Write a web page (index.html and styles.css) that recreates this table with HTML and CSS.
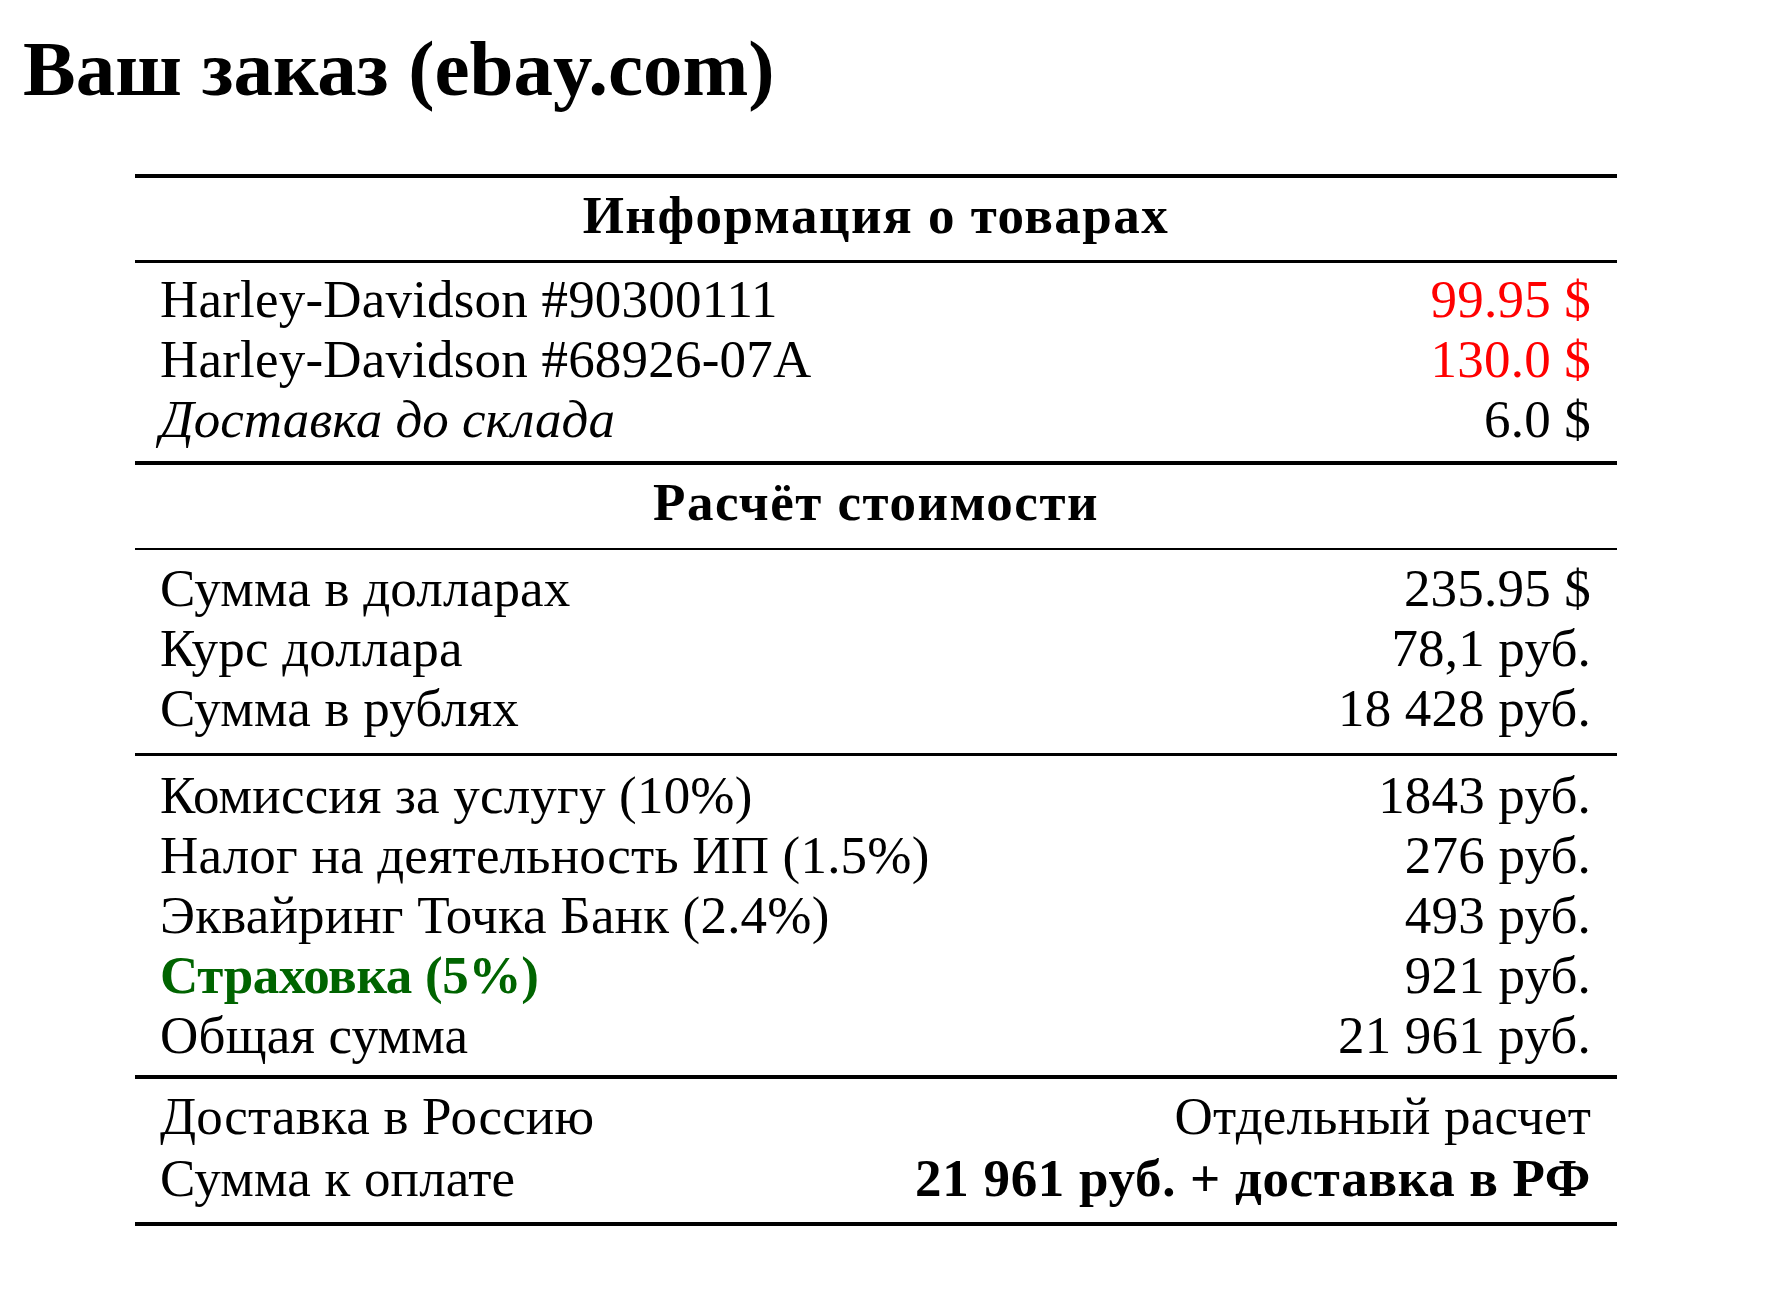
FILE: index.html
```html
<!DOCTYPE html>
<html lang="ru">
<head>
<meta charset="utf-8">
<title>Ваш заказ (ebay.com)</title>
<link rel="stylesheet" href="styles.css">
</head>
<body>
<div class="page">
  <h1 class="title">Ваш заказ (ebay.com)</h1>
  <div class="order">
    <div class="head head-first">Информация о товарах</div>
    <div class="group group-goods">
      <div class="row"><span class="label">Harley-Davidson #90300111</span><span class="value price">99.95 $</span></div>
      <div class="row"><span class="label">Harley-Davidson #68926-07A</span><span class="value price">130.0 $</span></div>
      <div class="row"><span class="label note">Доставка до склада</span><span class="value">6.0 $</span></div>
    </div>
    <div class="head head-second">Расчёт стоимости</div>
    <div class="group group-conv">
      <div class="row"><span class="label">Сумма в долларах</span><span class="value">235.95 $</span></div>
      <div class="row"><span class="label">Курс доллара</span><span class="value">78,1 руб.</span></div>
      <div class="row"><span class="label">Сумма в рублях</span><span class="value">18 428 руб.</span></div>
    </div>
    <div class="group group-fees">
      <div class="row"><span class="label">Комиссия за услугу (10%)</span><span class="value">1843 руб.</span></div>
      <div class="row"><span class="label">Налог на деятельность ИП (1.5%)</span><span class="value">276 руб.</span></div>
      <div class="row"><span class="label">Эквайринг Точка Банк (2.4%)</span><span class="value">493 руб.</span></div>
      <div class="row"><span class="label insurance">Страховка (5%)</span><span class="value">921 руб.</span></div>
      <div class="row"><span class="label">Общая сумма</span><span class="value">21 961 руб.</span></div>
    </div>
    <div class="group group-total">
      <div class="row"><span class="label">Доставка в Россию</span><span class="value">Отдельный расчет</span></div>
      <div class="row"><span class="label">Сумма к оплате</span><span class="value strong">21 961 руб. + доставка в РФ</span></div>
    </div>
  </div>
</div>
</body>
</html>
```

FILE: styles.css
```css
html, body {
  margin: 0;
  padding: 0;
  background: #ffffff;
}

body {
  font-family: "Liberation Serif", "Times New Roman", serif;
  color: #000000;
}

.page {
  padding: 30px 0 0 23px;
}

.title {
  margin: 0;
  font-size: 79px;
  line-height: 78px;
  font-weight: bold;
}

.order {
  margin: 66px 0 0 112px;
  width: 1482px;
  font-size: 53px;
  line-height: 60px;
  letter-spacing: 0.2px;
  border-top: 4px solid #000;
  border-bottom: 4px solid #000;
}

.head {
  text-align: center;
  font-weight: bold;
  letter-spacing: 1.5px;
  padding: 7px 0 15px;
}

.head-second {
  padding: 7px 0 16px;
  border-top: 4px solid #000;
}

.group {
  display: flex;
  flex-direction: column;
  padding: 0 26px 0 25px;
}

.group-goods {
  border-top: 3px solid #000;
  padding-top: 6px;
  padding-bottom: 12px;
}

.group-conv {
  border-top: 2px solid #000;
  padding-top: 8px;
  padding-bottom: 15px;
}

.group-fees {
  border-top: 3px solid #000;
  padding-top: 9px;
  padding-bottom: 10px;
}

.group-total {
  border-top: 4px solid #000;
  padding-top: 7px;
  padding-bottom: 14px;
  gap: 2px;
}

.row {
  display: flex;
  justify-content: space-between;
  align-items: baseline;
  height: 60px;
}

.label {
  white-space: nowrap;
}

.value {
  white-space: nowrap;
  text-align: right;
}

.note {
  font-style: italic;
  letter-spacing: 0;
}

.price {
  color: #ff0000;
}

.insurance {
  color: #006400;
  font-weight: bold;
  letter-spacing: -0.3px;
}

.strong {
  font-weight: bold;
  letter-spacing: 0.7px;
}
```
